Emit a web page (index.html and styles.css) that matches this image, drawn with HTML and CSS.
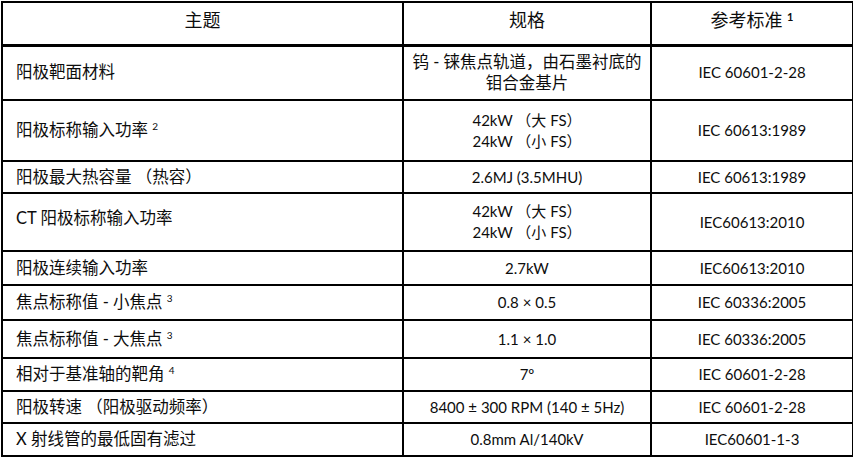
FILE: index.html
```html
<!DOCTYPE html>
<html lang="zh-CN">
<head>
<meta charset="utf-8">
<title>规格</title>
<link rel="stylesheet" href="styles.css">
</head>
<body>
<table class="spec">
  <colgroup>
    <col class="c1">
    <col class="c2">
    <col class="c3">
  </colgroup>
  <thead>
    <tr class="r-head">
      <th>主题</th>
      <th>规格</th>
      <th class="th-ref">参考标准 <sup class="bold">1</sup></th>
    </tr>
  </thead>
  <tbody>
    <tr class="r55">
      <td class="name">阳极靶面材料</td>
      <td>钨 - 铼焦点轨道，由石墨衬底的<br>钼合金基片</td>
      <td class="lat">IEC 60601-2-28</td>
    </tr>
    <tr class="r61">
      <td class="name">阳极标称输入功率 <sup>2</sup></td>
      <td class="lat2">42kW （大 FS）<br>24kW （小 FS）</td>
      <td class="lat">IEC 60613:1989</td>
    </tr>
    <tr class="r32">
      <td class="name">阳极最大热容量 （热容）</td>
      <td class="lat">2.6MJ (3.5MHU)</td>
      <td class="lat">IEC 60613:1989</td>
    </tr>
    <tr class="r58">
      <td class="name raised">CT 阳极标称输入功率</td>
      <td class="lat2">42kW （大 FS）<br>24kW （小 FS）</td>
      <td class="lat">IEC60613:2010</td>
    </tr>
    <tr class="r34">
      <td class="name">阳极连续输入功率</td>
      <td class="lat">2.7kW</td>
      <td class="lat">IEC60613:2010</td>
    </tr>
    <tr class="r35">
      <td class="name">焦点标称值 - 小焦点 <sup>3</sup></td>
      <td class="lat">0.8 × 0.5</td>
      <td class="lat">IEC 60336:2005</td>
    </tr>
    <tr class="r38">
      <td class="name">焦点标称值 - 大焦点 <sup>3</sup></td>
      <td class="lat">1.1 × 1.0</td>
      <td class="lat">IEC 60336:2005</td>
    </tr>
    <tr class="r33">
      <td class="name">相对于基准轴的靶角 <sup>4</sup></td>
      <td class="lat">7º</td>
      <td class="lat">IEC 60601-2-28</td>
    </tr>
    <tr class="r32">
      <td class="name">阳极转速 （阳极驱动频率）</td>
      <td class="lat">8400 ± 300 RPM (140 ± 5Hz)</td>
      <td class="lat">IEC 60601-2-28</td>
    </tr>
    <tr class="r33">
      <td class="name">X 射线管的最低固有滤过</td>
      <td class="lat">0.8mm Al/140kV</td>
      <td class="lat">IEC60601-1-3</td>
    </tr>
  </tbody>
</table>
</body>
</html>
```
FILE: styles.css
```css
html, body {
  margin: 0;
  padding: 0;
  background: #ffffff;
}

body {
  font-family: "Lato", "Noto Sans CJK SC", sans-serif;
  color: #0d0d0d;
  font-size: 16.5px;
}

.spec {
  border-collapse: collapse;
  table-layout: fixed;
  width: 852px;
  margin-top: 1px;
  margin-left: 1px;
}

.c1 { width: 401px; }
.c2 { width: 248px; }
.c3 { width: 202px; }

.spec th,
.spec td {
  border: 2px solid #000;
  padding: 0;
  text-align: center;
  vertical-align: middle;
  line-height: 21px;
}

.spec th {
  font-weight: normal;
  font-size: 18px;
  vertical-align: top;
  padding-top: 7px;
}

.r-head th {
  border-bottom-width: 3px;
}

.r-head { height: 43px; }
.r55 { height: 55px; }
.r61 { height: 61px; }
.r32 { height: 32px; }
.r58 { height: 58px; }
.r34 { height: 34px; }
.r35 { height: 35px; }
.r38 { height: 38px; }
.r33 { height: 33px; }

.spec td.name {
  text-align: left;
  padding-left: 13px;
}

.spec td.raised {
  padding-bottom: 7px;
}

.lat {
  font-size: 15px;
}

.lat2 {
  font-size: 15px;
  line-height: 22px;
}

sup {
  font-size: 10px;
  line-height: 0;
  vertical-align: 6px;
}

sup.bold {
  font-weight: bold;
  font-size: 11px;
}
```
